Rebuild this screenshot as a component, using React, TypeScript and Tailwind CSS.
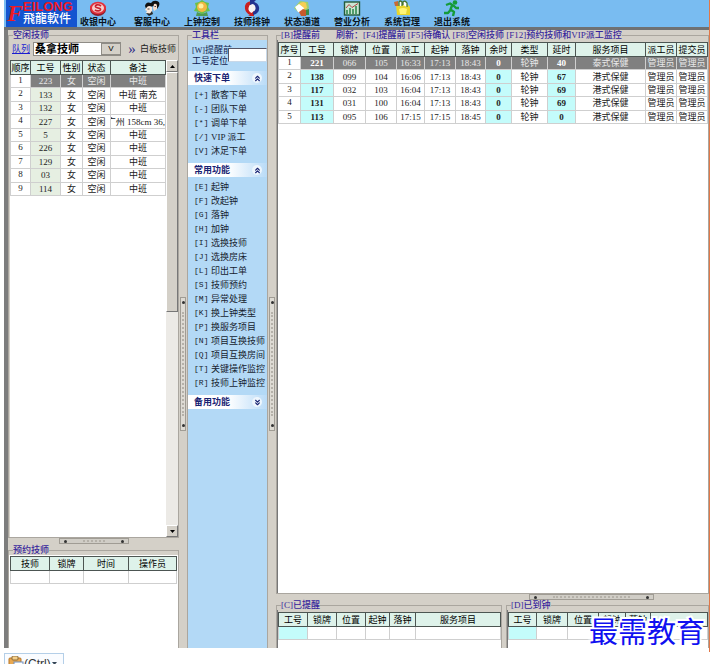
import React from "react";
import { ChevronsDown, ChevronsUp } from "lucide-react";

type Align = "plain" | "cyan" | "tint" | "index";

interface Column {
  label: string;
  width?: number;
  kind?: Align;
}

const cellKinds: Record<Align, string> = {
  plain: "",
  cyan: "bg-[#c4fcfb] font-bold",
  tint: "bg-[#e6efe2]",
  index: "align-top",
};

function Grid({
  caption,
  columns,
  rows,
  selected = -1,
  className = "",
}: {
  caption: string;
  columns: Column[];
  rows: string[][];
  selected?: number;
  className?: string;
}) {
  return (
    <table
      aria-label={caption}
      className={`w-full table-fixed border-collapse bg-white text-center text-[#222] ${className}`}
    >
      <colgroup>
        {columns.map((c, i) => (
          <col key={i} style={c.width ? { width: c.width } : undefined} />
        ))}
      </colgroup>
      <thead>
        <tr className="h-[14px]">
          {columns.map((c, i) => (
            <th
              key={i}
              className="overflow-hidden border border-[#4c5552] bg-[#def2ea] p-0 font-normal whitespace-nowrap text-black"
            >
              {c.label}
            </th>
          ))}
        </tr>
      </thead>
      <tbody>
        {rows.map((row, r) => (
          <tr key={r} className="h-[13px]">
            {row.map((cell, i) => {
              const kind = columns[i].kind ?? "plain";
              const tone =
                r === selected && i > 0
                  ? `bg-[#808080] ${kind === "cyan" ? "font-bold text-white" : "text-[#e8e8e8]"}`
                  : cellKinds[kind];
              return (
                <td
                  key={i}
                  className={`overflow-hidden border border-[#cfcfcf] p-0 whitespace-nowrap ${tone}`}
                >
                  {cell.length > 9 ? <span className="flex justify-end">{cell}</span> : cell}
                </td>
              );
            })}
          </tr>
        ))}
      </tbody>
    </table>
  );
}

function Group({
  title,
  className = "",
  children,
}: {
  title: React.ReactNode;
  className?: string;
  children: React.ReactNode;
}) {
  return (
    <fieldset className={`flex min-h-0 min-w-0 flex-col border border-[#aaa69f] ${className}`}>
      <legend className="ml-1 h-[10px] bg-[#d4d0c8] font-medium whitespace-nowrap text-[#36259c]">
        {title}
      </legend>
      {children}
    </fieldset>
  );
}

function VerticalHandle() {
  return (
    <div className="flex w-2 flex-col items-center bg-[#d4d0c8]">
      <div className="mt-[267px] flex h-[134px] w-[6px] flex-col items-center justify-between border border-[#a09c94] bg-[#dedbd4] py-[3px]">
        <span className="size-[3px] rounded-full bg-[#333]" />
        <span className="my-2 w-0 flex-1 border-l-2 border-dotted border-[#b5b1a9]" />
        <span className="size-[3px] rounded-full bg-[#333]" />
      </div>
    </div>
  );
}

function HorizontalHandle({ className = "" }: { className?: string }) {
  return (
    <div
      className={`flex h-[6px] items-center border border-[#a09c94] bg-[#d0cdc6] px-1 ${className}`}
    >
      <span className="size-[3px] rounded-full bg-[#333]" />
      <span className="mx-4 h-0 flex-1 border-t-2 border-dotted border-[#b5b1a9]" />
      <span className="size-[3px] rounded-full bg-[#333]" />
    </div>
  );
}

const toolbar: { label: string; icon: React.ReactNode }[] = [
  {
    label: "收银中心",
    icon: (
      <>
        <ellipse cx="9" cy="9.500" rx="8" ry="6.500" fill="#8f1d2a" />
        <ellipse cx="9" cy="8" rx="8" ry="6.200" fill="#e2303c" />
        <ellipse cx="9" cy="8" rx="6" ry="4.600" fill="#f7cfcd" />
        <path d="M12 6C9.500 4 6 4.500 6.500 6.800C7 8.500 12 7.500 11.500 9.700C11 11.300 7.500 11.300 6 9.800" stroke="#c8202c" strokeWidth="1.700" fill="none" />
      </>
    ),
  },
  {
    label: "客服中心",
    icon: (
      <>
        <path d="M2 6Q3 1 8 3Q10 0 14 1Q17.500 2 16 6L14 9L11 6L7 7L4 11Z" fill="#111" />
        <path d="M4 7Q6 5 9 7L9 11L7 15L3 13L4 11L2 10Z" fill="#fbe9dc" />
        <path d="M11 4Q14 3 14 6L14 9L11 11L10 8Z" fill="#f7ddcb" />
        <path d="M3 13L6 16L10 14L9 11L7 13.500Z" fill="#2a2a2a" />
        <path d="M4.500 9H6.500M11.500 6.500H13" stroke="#222" strokeWidth=".8" />
      </>
    ),
  },
  {
    label: "上钟控制",
    icon: (
      <>
        <path d="M9 0L12 2L16 3L15 7L17 11L12 12L9 15L6 12L1 11L3 7L2 3L6 2Z" fill="#6cc04a" />
        <circle cx="9" cy="7" r="5" fill="#f3b744" />
        <circle cx="8" cy="6" r="2.500" fill="#fff0a0" />
        <path d="M4 12L9 14L14 12L15 16H3Z" fill="#4f9a52" />
      </>
    ),
  },
  {
    label: "技师排钟",
    icon: (
      <>
        <circle cx="9" cy="8" r="6" fill="#f8f3f3" />
        <path d="M8 1Q1 2 2 9Q3 13 7 15L5 16H11V11L8.500 13Q5 11 5.500 8Q6 5 8 4Z" fill="#c82020" />
        <path d="M10 15Q17 13 16 7Q15 3 11 2L13 0H7V5L9.500 4Q13 5 12.500 9Q12 11 10 12Z" fill="#24338f" />
      </>
    ),
  },
  {
    label: "状态通道",
    icon: (
      <>
        <path d="M1 8L7 1L15 2L16 8L12 13L5 12Z" fill="#9fcf6c" />
        <path d="M5 5Q9 0 13 3L14 8L10 10L6 8Z" fill="#f6ce54" />
        <path d="M2 7L6 4L11 8L9 13L5 12Z" fill="#fff" />
        <path d="M6 12L10 9L15 11L13 16H8Z" fill="#c8592c" />
        <path d="M13 10L16 9L16 15H13Z" fill="#3b8c47" />
      </>
    ),
  },
  {
    label: "营业分析",
    icon: (
      <>
        <rect x="1.500" y="2" width="15" height="13" fill="#c9e6d4" stroke="#245a3c" strokeWidth="1.400" />
        <path d="M4 14V10M7 14V8M10 14V9M13 14V6" stroke="#338a50" strokeWidth="1.600" />
        <path d="M3 8L6 4.500L9 7.500L15 3.500" stroke="#b44242" fill="none" />
      </>
    ),
  },
  {
    label: "系统管理",
    icon: (
      <>
        <path d="M3 5L7 3L14 4L17 7V15H4Z" fill="#e8d52e" />
        <path d="M6 6V2Q7 0 9 2V6M10 5V2Q12 0 14 3V7" stroke="#46742f" strokeWidth="1.300" fill="#fff" />
        <path d="M1 2L5 1L5 6L2 6Z" fill="#c76a33" />
        <path d="M6 9Q10 7 14 9L13 14H7Z" fill="#fff477" />
      </>
    ),
  },
  {
    label: "退出系统",
    icon: (
      <>
        <circle cx="12" cy="2.500" r="2.300" fill="#159b39" />
        <path d="M3 5L7 3.500L11 6L13 8H16M9 5.500L7.500 9.500L11 12L10 16M7.500 10L5 13H1" stroke="#159b39" strokeWidth="2.400" fill="none" strokeLinejoin="round" />
      </>
    ),
  },
];

const idleColumns: Column[] = [
  { label: "顺序", width: 20, kind: "index" },
  { label: "工号", width: 30, kind: "tint" },
  { label: "性别", width: 22 },
  { label: "状态", width: 28 },
  { label: "备注" },
];

const idleRows = [
  ["1", "223", "女", "空闲", "中班"],
  ["2", "133", "女", "空闲", "中班 南充"],
  ["3", "132", "女", "空闲", "中班"],
  ["4", "227", "女", "空闲", "广州 158cm 36,"],
  ["5", "5", "女", "空闲", "中班"],
  ["6", "226", "女", "空闲", "中班"],
  ["7", "129", "女", "空闲", "中班"],
  ["8", "03", "女", "空闲", "中班"],
  ["9", "114", "女", "空闲", "中班"],
];

const bookingColumns: Column[] = [
  { label: "技师", width: 39 },
  { label: "锁牌", width: 34 },
  { label: "时间", width: 45 },
  { label: "操作员" },
];

const workColumns: Column[] = [
  { label: "序号", width: 22, kind: "index" },
  { label: "工号", width: 33, kind: "cyan" },
  { label: "锁牌", width: 32 },
  { label: "位置", width: 31 },
  { label: "派工", width: 28 },
  { label: "起钟", width: 31 },
  { label: "落钟", width: 30 },
  { label: "余时", width: 26, kind: "cyan" },
  { label: "类型", width: 36 },
  { label: "延时", width: 28, kind: "cyan" },
  { label: "服务项目" },
  { label: "派工员", width: 31 },
  { label: "提交员", width: 31 },
];

const workRows = [
  ["1", "221", "066", "105", "16:33", "17:13", "18:43", "0", "轮钟", "40", "泰式保健", "管理员", "管理员"],
  ["2", "138", "099", "104", "16:06", "17:13", "18:43", "0", "轮钟", "67", "港式保健", "管理员", "管理员"],
  ["3", "117", "032", "103", "16:04", "17:13", "18:43", "0", "轮钟", "69", "港式保健", "管理员", "管理员"],
  ["4", "131", "031", "100", "16:04", "17:13", "18:43", "0", "轮钟", "69", "港式保健", "管理员", "管理员"],
  ["5", "113", "095", "106", "17:15", "17:15", "18:45", "0", "轮钟", "0", "港式保健", "管理员", "管理员"],
];

const remindedColumns: Column[] = [
  { label: "工号", width: 29, kind: "cyan" },
  { label: "锁牌", width: 29 },
  { label: "位置", width: 29 },
  { label: "起钟", width: 24 },
  { label: "落钟", width: 26 },
  { label: "服务项目" },
];

const finishedColumns: Column[] = [
  { label: "工号", width: 28, kind: "cyan" },
  { label: "锁牌", width: 31 },
  { label: "位置", width: 31 },
  { label: "起钟", width: 27 },
  { label: "落钟", width: 25 },
  { label: "" },
];

const menu = [
  {
    title: "快速下单",
    open: true,
    items: ["+散客下单", "-团队下单", "*调单下单", "/VIP 派工", "V沐足下单"],
  },
  {
    title: "常用功能",
    open: true,
    items: [
      "E起钟",
      "F改起钟",
      "G落钟",
      "H加钟",
      "I选换技师",
      "J选换房床",
      "L印出工单",
      "S技师预约",
      "M异常处理",
      "K换上钟类型",
      "P换服务项目",
      "N项目互换技师",
      "Q项目互换房间",
      "T关键操作监控",
      "R技师上钟监控",
    ],
  },
  { title: "备用功能", open: false, items: [] },
];

function Logo() {
  return (
    <div className="flex h-full w-[71px] bg-[#1454d0]">
      <span className="w-[17px] pl-px text-[24px] leading-[26px] font-bold text-[#ee1b24] italic">F</span>
      <div className="flex flex-1 flex-col pr-[3px]">
        <span className="font-['Liberation_Sans',sans-serif] text-[13px] leading-[13px] font-bold text-[#ee1b24]">
          EILONG
        </span>
        <span className="flex justify-between text-[12px] leading-[13px] font-medium text-white">
          飛龍軟件
        </span>
      </div>
    </div>
  );
}

function TopBar() {
  return (
    <header className="flex h-[30px] shrink-0 border-b-[3px] border-[#6f7173] bg-[#79bcf1] pl-[2px]">
      <Logo />
      <nav className="ml-[3px] flex gap-[14px]">
        {toolbar.map((t, i) => (
          <button
            key={t.label}
            type="button"
            className={`flex w-9 flex-col items-center ${i === 0 ? "mr-1" : ""}`}
          >
            <svg viewBox="0 0 18 17" className="h-[17px] w-[18px]">
              {t.icon}
            </svg>
            <span className="leading-[10px] font-bold whitespace-nowrap text-[#0a1420]">{t.label}</span>
          </button>
        ))}
      </nav>
    </header>
  );
}

function ScrollBar() {
  return (
    <div className="flex w-3 shrink-0 flex-col bg-[#eceae6]">
      <button
        type="button"
        aria-label="向上"
        className="flex h-3 items-center justify-center border border-[#fff] border-r-[#777] border-b-[#777] bg-[#d4d0c8]"
      >
        <svg viewBox="0 0 5 3" className="h-[3px] w-[5px]">
          <path d="M0 3L2.500 0L5 3Z" />
        </svg>
      </button>
      <div className="h-[240px] border border-[#fff] border-r-[#777] border-b-[#777] bg-[#d4d0c8]" />
      <button
        type="button"
        aria-label="向下"
        className="mt-auto flex h-3 items-center justify-center border border-[#fff] border-r-[#777] border-b-[#777] bg-[#d4d0c8]"
      >
        <svg viewBox="0 0 5 3" className="h-[3px] w-[5px]">
          <path d="M0 0L2.500 3L5 0Z" />
        </svg>
      </button>
    </div>
  );
}

function IdlePanel() {
  return (
    <aside className="flex w-[175px] shrink-0 flex-col border-l-4 border-[#7d7d7d]">
      <Group title="空闲技师" className="flex-1">
        <div className="flex h-full flex-col">
          <div className="mt-[2px] flex h-[14px] items-center pl-[3px]">
            <label htmlFor="queue" className="w-[21px] text-[#1c1cd0] underline">
              队列
            </label>
            <div className="grid w-[88px] grid-cols-1 items-center bg-white">
              <select
                id="queue"
                className="col-start-1 row-start-1 h-[14px] appearance-none border border-[#8f8c86] bg-white pl-px text-[11px] leading-[12px] font-bold text-black"
              >
                <option>桑拿技师</option>
              </select>
              <span className="pointer-events-none col-start-1 row-start-1 flex h-3 w-5 items-center justify-center justify-self-end border border-[#8f8c86] bg-[#d4d0c8] font-['Liberation_Sans',sans-serif] text-[8px]">
                V
              </span>
            </div>
            <button type="button" className="ml-[7px] flex items-center gap-1 whitespace-nowrap text-[#222]">
              <span className="w-2 text-[15px] leading-[12px] text-[#2c2c86]">»</span>
              白板技师
            </button>
          </div>
          <div className="mt-1 ml-px flex min-h-0 flex-1 bg-white">
            <div className="min-w-0 flex-1">
              <Grid caption="空闲技师" columns={idleColumns} rows={idleRows} selected={0} className="h-[136px]" />
            </div>
            <ScrollBar />
          </div>
        </div>
      </Group>
      <div className="flex h-[7px] shrink-0 justify-center">
        <HorizontalHandle className="w-[70px]" />
      </div>
      <Group title="预约技师" className="h-[103px] border-b-0">
        <div className="h-[93px] bg-white px-px pt-px">
          <Grid caption="预约技师" columns={bookingColumns} rows={[["", "", "", ""]]} />
        </div>
      </Group>
    </aside>
  );
}

function ToolPanel() {
  return (
    <Group title="工具栏" className="w-[81px] shrink-0 border-b-0">
      <div className="h-full bg-[#b3d9f6]">
        <div className="flex h-[31px] items-start pt-[5px] pl-1">
          <label htmlFor="locate" className="w-9 shrink-0 leading-[10px] whitespace-nowrap text-[#101c50]">
            <span className="text-[8px]">[W]</span>提醒前
            <br />
            工号定位
          </label>
          <input
            id="locate"
            className="mt-[3px] h-[14px] w-full min-w-0 border border-[#556] border-r-[#c8d8e8] border-b-[#c8d8e8] bg-white"
          />
        </div>
        {menu.map((s) => (
          <section key={s.title}>
            <h2>
              <button
                type="button"
                className="flex h-[14px] w-full items-center justify-between bg-linear-to-r from-white via-white to-[#b9dbf7] pr-[5px] pl-[6px] font-bold text-[#182272]"
              >
                {s.title}
                <span className="flex size-[10px] items-center justify-center rounded-full bg-[#eef6fd]">
                  {s.open ? (
                    <ChevronsUp className="size-[9px]" strokeWidth={3} />
                  ) : (
                    <ChevronsDown className="size-[9px]" strokeWidth={3} />
                  )}
                </span>
              </button>
            </h2>
            {s.open && (
              <ul className="pt-[3px] pb-[5px]">
                {s.items.map((t) => (
                  <li key={t} className="h-[14px]">
                    <button type="button" className="flex h-full items-center pl-[6px] whitespace-nowrap text-[#16222e]">
                      <span className="w-[17px] text-left font-['Liberation_Mono',monospace] text-[8px]">
                        [{t[0]}]
                      </span>
                      {t.slice(1)}
                    </button>
                  </li>
                ))}
              </ul>
            )}
          </section>
        ))}
      </div>
    </Group>
  );
}

function WorkPanel() {
  return (
    <section className="flex min-w-0 flex-1 flex-col">
      <Group
        title={
          <span className="flex gap-4">
            <span>[B]提醒前</span>
            <span>刷新：[F4]提醒前 [F5]待确认 [F8]空闲技师 [F12]预约技师和VIP派工监控</span>
          </span>
        }
        className="flex-1"
      >
        <div className="h-full border-l border-[#777] pt-[2px]">
          <div className="h-full bg-white">
            <Grid caption="提醒前" columns={workColumns} rows={workRows} selected={0} className="h-[82px]" />
          </div>
        </div>
      </Group>
      <div className="flex h-[6px] shrink-0 justify-end pr-[55px]">
        <HorizontalHandle className="w-[125px]" />
      </div>
      <div className="flex h-12 shrink-0 gap-1">
        <Group title="[C]已提醒" className="flex-1 border-b-0">
          <div className="h-[38px] border-l border-[#777] pt-[2px]">
            <div className="h-full bg-white">
              <Grid caption="已提醒" columns={remindedColumns} rows={[["", "", "", "", "", ""]]} />
            </div>
          </div>
        </Group>
        <Group title="[D]已到钟" className="w-[203px] border-b-0">
          <div className="h-[38px] border-l border-[#777] pt-[2px]">
            <div className="h-full bg-white">
              <Grid caption="已到钟" columns={finishedColumns} rows={[["", "", "", "", "", ""]]} />
            </div>
          </div>
        </Group>
      </div>
    </section>
  );
}

export default function App() {
  return (
    <div
      lang="zh-CN"
      className="relative flex h-screen flex-col overflow-hidden bg-white pr-px pl-1 font-['Liberation_Serif','Noto_Sans_CJK_SC',sans-serif] text-[9px] leading-[10px]"
    >
      <div className="flex min-h-0 flex-1 flex-col border-r border-[#e07848] pb-1">
        <TopBar />
        <main className="flex min-h-0 flex-1 bg-[#d4d0c8]">
          <IdlePanel />
          <VerticalHandle />
          <ToolPanel />
          <VerticalHandle />
          <WorkPanel />
        </main>
      </div>
      <footer className="h-3 shrink-0 overflow-hidden">
        <button
          type="button"
          className="mt-px flex h-5 w-[60px] items-start border border-[#b4cfe8] bg-[#fafcff] pt-[2px] pl-[3px] text-[#333]"
        >
          <svg viewBox="0 0 16 16" className="size-4 shrink-0">
            <rect x="1" y="2" width="12" height="13" rx="1" fill="#e9a850" stroke="#b87420" />
            <rect x="4" y="0" width="6" height="4" rx="1" fill="#f4d08c" stroke="#8a6a3a" />
            <rect x="6" y="6" width="9" height="9" fill="#fff" stroke="#6f8fc0" />
          </svg>
          <span className="pt-px font-['Liberation_Sans',sans-serif] text-[12px] leading-[14px]">(Ctrl)</span>
          <svg viewBox="0 0 5 3" className="mt-[6px] ml-px h-[3px] w-[5px]">
            <path d="M0 0H5L2.500 3Z" fill="#345" />
          </svg>
        </button>
      </footer>
      <p className="pointer-events-none absolute right-[6px] bottom-[18px] font-['Noto_Sans_CJK_SC',sans-serif] text-[29px] leading-[32px] text-[#1010f0] [paint-order:stroke_fill] [-webkit-text-stroke:4px_white]">
        最需教育
      </p>
    </div>
  );
}
